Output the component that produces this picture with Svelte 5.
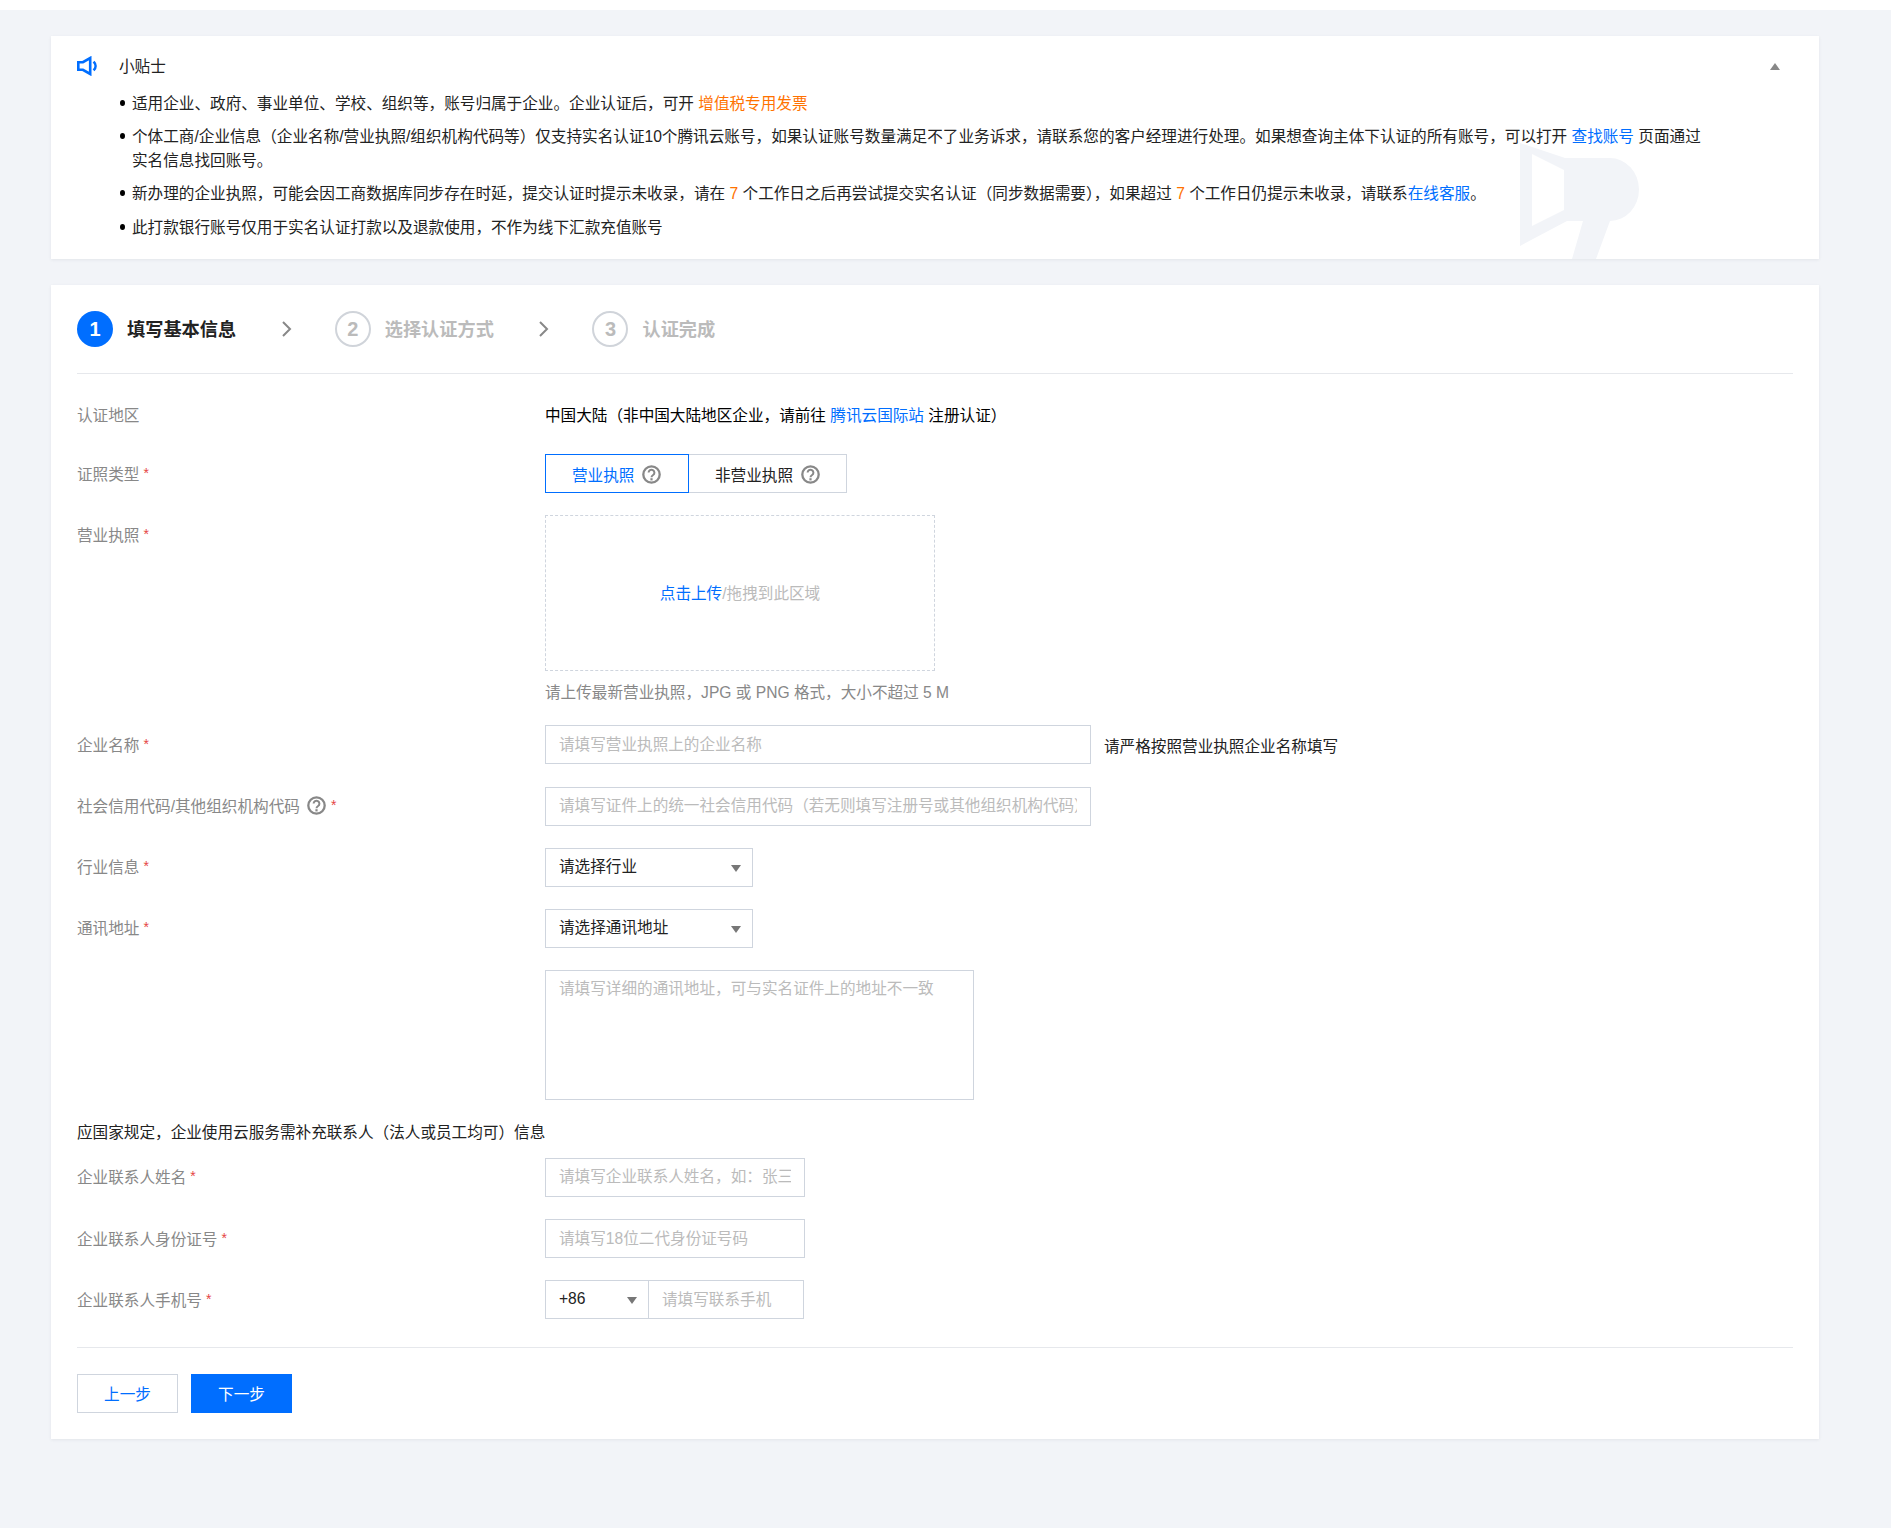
<script>
	const tips = ['填写基本信息', '选择认证方式', '认证完成'];
</script>

{#snippet help()}
	<svg class="help" viewBox="0 0 19 19" aria-hidden="true">
		<circle cx="9.5" cy="9.5" r="8.2" fill="none" stroke="#888" stroke-width="2.3" />
		<path d="M6.6 7.6a2.9 2.9 0 1 1 4.5 2.4c-1.1.7-1.6 1.1-1.6 2.2" fill="none" stroke="#888" stroke-width="2" />
		<rect x="8.4" y="13.2" width="2.2" height="2.2" fill="#888" />
	</svg>
{/snippet}

{#snippet label(text)}
	<div class="label">{text} <span class="req">*</span></div>
{/snippet}

<div class="page">
	<section class="card tips">
		<svg class="watermark" viewBox="0 0 120 116" aria-hidden="true">
			<path fill-rule="evenodd" d="M0 0L45 15H90A29 31.5 0 0 1 90 78L76 116H52L63 78H47L0 103ZM12 11V83L44 67V27Z" />
		</svg>
		<div class="tips-head">
			<svg class="horn" viewBox="0 0 20 20" aria-hidden="true">
				<path d="M1.3 6.2h4.6l7.3-4.2v16l-7.3-4.2H1.3z" fill="none" stroke="#006eff" stroke-width="2.6" />
				<path d="M16.6 5.6c2.6 2.6 2.6 6.2 0 8.8" fill="none" stroke="#006eff" stroke-width="2.6" />
			</svg>
			<span class="tips-title">小贴士</span>
			<span class="collapse"></span>
		</div>
		<ul>
			<li>适用企业、政府、事业单位、学校、组织等，账号归属于企业。企业认证后，可开 <a class="warn" href="#top">增值税专用发票</a></li>
			<li>个体工商/企业信息（企业名称/营业执照/组织机构代码等）仅支持实名认证10个腾讯云账号，如果认证账号数量满足不了业务诉求，请联系您的客户经理进行处理。如果想查询主体下认证的所有账号，可以打开 <a href="#top">查找账号</a> 页面通过实名信息找回账号。</li>
			<li>新办理的企业执照，可能会因工商数据库同步存在时延，提交认证时提示未收录，请在 <span class="warn">7</span> 个工作日之后再尝试提交实名认证（同步数据需要），如果超过 <span class="warn">7</span> 个工作日仍提示未收录，请联系<a href="#top">在线客服</a>。</li>
			<li>此打款银行账号仅用于实名认证打款以及退款使用，不作为线下汇款充值账号</li>
		</ul>
	</section>

	<section class="card main">
		<div class="steps">
			{#each tips as step, i}
				<div class="step" class:current={i === 0}>
					<span class="num">{i + 1}</span>
					<span class="step-name">{step}</span>
				</div>
				{#if i < tips.length - 1}
					<svg class="chev" viewBox="0 0 12 18" aria-hidden="true">
						<path d="M2 2l7 7-7 7" fill="none" stroke="#888" stroke-width="2" />
					</svg>
				{/if}
			{/each}
		</div>

		<div class="rows">
			<div class="row first">
				<div class="label">认证地区</div>
				<div class="plain">中国大陆（非中国大陆地区企业，请前往 <a href="#top">腾讯云国际站</a> 注册认证）</div>
			</div>
			<div class="row">
				{@render label('证照类型')}
				<div class="segment">
					<div class="seg active">营业执照 {@render help()}</div>
					<div class="seg">非营业执照 {@render help()}</div>
				</div>
			</div>
			<div class="row">
				{@render label('营业执照')}
				<div>
					<div class="upload"><a href="#top">点击上传</a><span>/拖拽到此区域</span></div>
					<div class="hint">请上传最新营业执照，JPG 或 PNG 格式，大小不超过 5 M</div>
				</div>
			</div>
			<div class="row">
				{@render label('企业名称')}
				<div class="inline">
					<input class="wide" placeholder="请填写营业执照上的企业名称" />
					<span class="note">请严格按照营业执照企业名称填写</span>
				</div>
			</div>
			<div class="row">
				<div class="label">社会信用代码/其他组织机构代码 <span class="help-wrap">{@render help()}</span> <span class="req">*</span></div>
				<input class="wide" placeholder="请填写证件上的统一社会信用代码（若无则填写注册号或其他组织机构代码）" />
			</div>
			<div class="row">
				{@render label('行业信息')}
				<div class="select">请选择行业<i></i></div>
			</div>
			<div class="row">
				{@render label('通讯地址')}
				<div class="select">请选择通讯地址<i></i></div>
			</div>
			<div class="row">
				<div></div>
				<textarea placeholder="请填写详细的通讯地址，可与实名证件上的地址不一致"></textarea>
			</div>
		</div>

		<div class="contact-title">应国家规定，企业使用云服务需补充联系人（法人或员工均可）信息</div>

		<div class="rows">
			<div class="row">
				{@render label('企业联系人姓名')}
				<input class="short" placeholder="请填写企业联系人姓名，如：张三" />
			</div>
			<div class="row">
				{@render label('企业联系人身份证号')}
				<input class="short" placeholder="请填写18位二代身份证号码" />
			</div>
			<div class="row">
				{@render label('企业联系人手机号')}
				<div class="phone">
					<div class="select code">+86<i></i></div>
					<input placeholder="请填写联系手机" />
				</div>
			</div>
		</div>

		<div class="actions">
			<button class="btn">上一步</button>
			<button class="btn primary">下一步</button>
		</div>
	</section>
</div>

<style>
	:global(body) {
		background: #fff;
		color: #000;
		font-family: "Liberation Sans", "Noto Sans CJK SC", sans-serif;
		font-size: 15.62px;
	}
	a { color: #006eff; text-decoration: none; }
	.warn { color: #ff7200; }
	.page {
		margin-top: 10px;
		min-height: 1518px;
		padding: 26px 72px 0 51px;
		background: #f2f4f8;
		box-sizing: border-box;
	}
	.card {
		position: relative;
		background: #fff;
		box-shadow: 0 1px 3px rgba(54, 58, 80, 0.08);
		overflow: hidden;
	}
	.tips { height: 223px; box-sizing: border-box; padding: 18px 26px 0; }
	.watermark {
		position: absolute;
		left: 1469px;
		top: 107px;
		width: 120px;
		height: 116px;
		fill: #f2f4f8;
	}
	.tips-head { position: relative; display: flex; align-items: center; height: 24px; }
	.horn { width: 20px; height: 20px; }
	.tips-title { margin-left: 22px; padding-bottom: 2px; color: #222; }
	.collapse {
		position: absolute;
		top: 9px;
		right: 13px;
		border: 5px solid transparent;
		border-top: 0;
		border-bottom: 7px solid #888;
	}
	ul {
		position: relative;
		list-style: none;
		margin: 14px 0 0;
		padding: 0 0 0 55px;
		width: 1628px;
		box-sizing: border-box;
		color: #222;
		line-height: 24px;
	}
	li { position: relative; margin-bottom: 9.2px; }
	li::before {
		content: '';
		position: absolute;
		left: -12px;
		top: 8px;
		width: 5px;
		height: 6px;
		border-radius: 50%;
		background: #000;
	}
	.main { height: 1154px; margin-top: 26px; box-sizing: border-box; padding: 26px 26px 0; }
	.steps {
		display: flex;
		align-items: center;
		height: 36px;
		padding-bottom: 26px;
		border-bottom: 1px solid #e6e8ec;
	}
	.step { display: flex; align-items: center; gap: 14px; color: #bbb; font-size: 18.2px; font-weight: 700; }
	.step-name { padding-bottom: 2px; }
	.num {
		display: flex;
		align-items: center;
		justify-content: center;
		width: 36px;
		height: 36px;
		box-sizing: border-box;
		border: 2px solid #d0d4da;
		border-radius: 50%;
		font-size: 20px;
	}
	.current { color: #222; }
	.current .num { border: 0; background: #006eff; color: #fff; }
	.chev { width: 12px; height: 18px; margin: 0 42px 0 44.6px; }
	.rows { display: flex; flex-direction: column; gap: 22.15px; }
	.steps + .rows { margin-top: 26px; }
	.row { display: grid; grid-template-columns: 468px 1fr; align-items: start; }
	.label { display: flex; align-items: center; gap: 4px; height: 39px; padding-bottom: 2px; box-sizing: border-box; color: #888; }
	.req { color: #e54545; font-size: 14px; }
	.help-wrap { display: flex; margin: 0 1px 0 3px; }
	.first { height: 32px; }
	.first .label, .first .plain { height: 32px; padding: 0; line-height: 32px; }
	.segment { display: flex; }
	.seg {
		display: flex;
		align-items: center;
		gap: 8px;
		height: 39px;
		padding: 1px 26px 0;
		box-sizing: border-box;
		border: 1px solid #cfd5de;
		margin-left: -1px;
		color: #222;
	}
	.seg.active {
		position: relative;
		width: 144px;
		margin-left: 0;
		border-color: #006eff;
		color: #006eff;
	}
	.help { width: 19px; height: 19px; flex: none; }
	.upload {
		display: flex;
		align-items: center;
		justify-content: center;
		width: 390px;
		height: 155.5px;
		padding-bottom: 2px;
		box-sizing: border-box;
		border: 1px dashed #cfd5de;
		color: #bbb;
	}
	.hint { height: 22.5px; margin-top: 10px; line-height: 24px; color: #888; }
	.inline { display: flex; align-items: center; gap: 13px; }
	.note { color: #222; }
	input, textarea {
		display: block;
		box-sizing: border-box;
		height: 39px;
		padding: 0 13px;
		border: 1px solid #cfd5de;
		border-radius: 0;
		outline: 0;
		background: #fff;
		font: inherit;
		color: #000;
	}
	input::placeholder, textarea::placeholder { color: #bbb; opacity: 1; }
	.wide { width: 546px; }
	.short { width: 260px; }
	textarea { width: 429px; height: 130px; padding: 6px 13px; resize: none; line-height: 24px; }
	.select {
		position: relative;
		width: 208px;
		height: 39px;
		box-sizing: border-box;
		padding-left: 13px;
		border: 1px solid #cfd5de;
		line-height: 36px;
		color: #222;
	}
	.select i {
		position: absolute;
		top: 16px;
		right: 11px;
		border: 5px solid transparent;
		border-bottom: 0;
		border-top: 7px solid #777;
	}
	.phone { display: flex; }
	.code { width: 104px; }
	.phone input { width: 156px; margin-left: -1px; }
	.contact-title { height: 24px; margin: 21px 0 13px; line-height: 24px; color: #222; }
	.actions {
		display: flex;
		gap: 13px;
		margin-top: 27.7px;
		padding-top: 26px;
		border-top: 1px solid #e6e8ec;
	}
	.btn {
		width: 101px;
		height: 39px;
		border: 1px solid #cfd5de;
		background: #fff;
		color: #006eff;
		font: inherit;
		cursor: pointer;
	}
	.primary { border-color: #006eff; background: #006eff; color: #fff; }
</style>
